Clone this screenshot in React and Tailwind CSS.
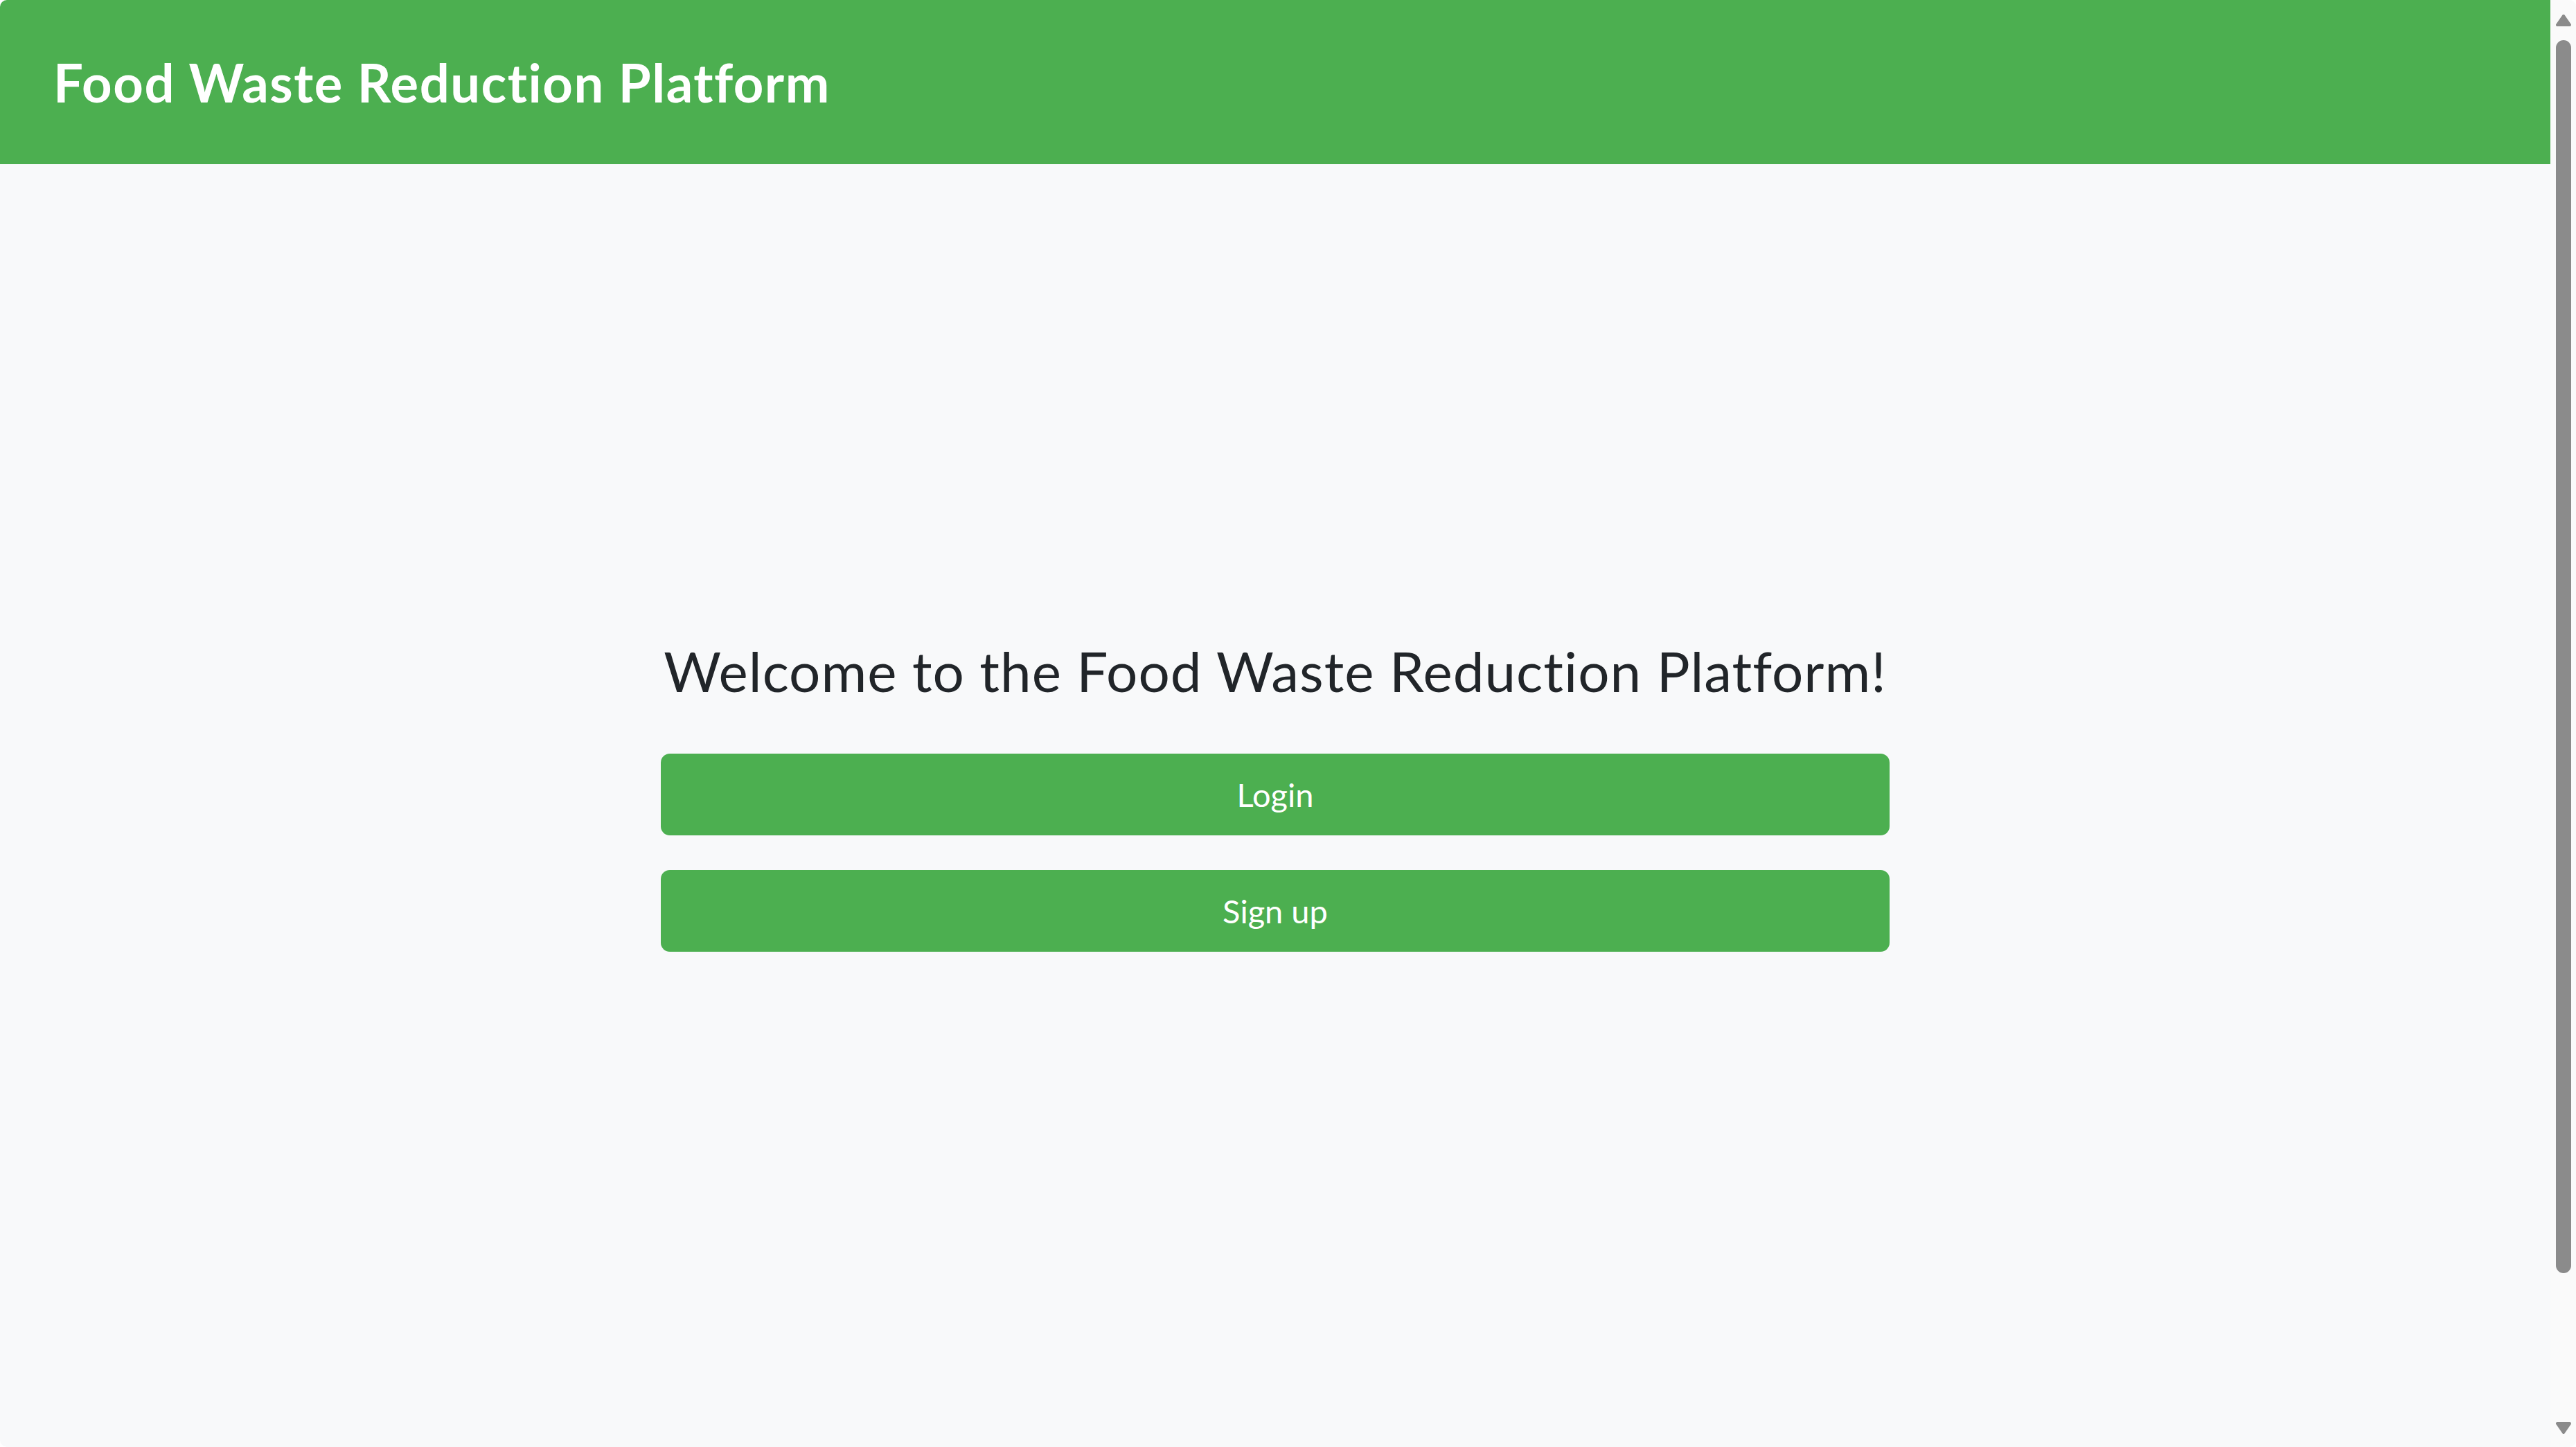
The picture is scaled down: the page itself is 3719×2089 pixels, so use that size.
import React from "react";

const font = { fontFamily: '"Lato", "Noto Sans", sans-serif' };

function ScrollArrow({ down = false }) {
  return (
    <svg width="24" height="17" viewBox="0 0 24 17" className="block">
      <path
        d={down ? "M3 2 L21 2 L12 15 Z" : "M3 15 L21 15 L12 2 Z"}
        fill="#8b8b8b"
        stroke="#8b8b8b"
        strokeWidth="4"
        strokeLinejoin="round"
      />
    </svg>
  );
}

export default function App() {
  return (
    <div
      className="flex h-screen w-full overflow-hidden rounded-[10px] bg-[#f8f9fa] [font-variant-ligatures:none]"
      style={font}
    >
      <div className="flex min-w-0 flex-1 flex-col">
        <header className="flex h-[237px] shrink-0 items-center bg-[#4caf50] px-[77px]">
          <h1 className="text-[76px] font-bold leading-none tracking-[1.5px] text-white">
            Food Waste Reduction Platform
          </h1>
        </header>

        <main className="flex flex-1 justify-center pt-[683px]">
          <div className="flex w-[1774px] flex-col items-center">
            <h2 className="whitespace-nowrap text-center text-[80px] font-normal leading-[1.2] tracking-[1px] text-[#212529]">
              Welcome to the Food Waste Reduction Platform!
            </h2>
            <div className="mt-[72px] flex w-full flex-col gap-[50px]">
              <button
                type="button"
                className="flex h-[118px] items-center justify-center rounded-[13px] bg-[#4caf50] text-[47px] text-white"
              >
                Login
              </button>
              <button
                type="button"
                className="flex h-[118px] items-center justify-center rounded-[13px] bg-[#4caf50] text-[47px] text-white"
              >
                Sign up
              </button>
            </div>
          </div>
        </main>
      </div>

      {/* scrollbar */}
      <div className="flex w-[37px] shrink-0 flex-col items-center bg-[#fafafa] pt-[21px] pb-[19px]">
        <ScrollArrow />
        <div className="mt-[20px] h-[1780px] w-[22px] rounded-full bg-[#8b8b8b]" />
        <div className="flex-1" />
        <ScrollArrow down />
      </div>
    </div>
  );
}
